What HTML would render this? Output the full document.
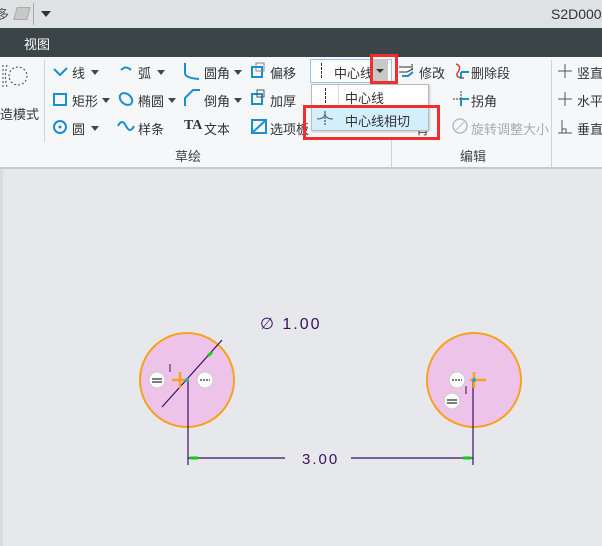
<!DOCTYPE html>
<html><head><meta charset="utf-8"><style>
*{margin:0;padding:0;box-sizing:border-box}
body{width:602px;height:546px;overflow:hidden;background:#e7e8ec;font-family:"Liberation Sans","Noto Sans CJK SC",sans-serif;position:relative;font-size:13px;color:#333}
.a{position:absolute;white-space:nowrap}
.t{font-size:13px;color:#333}
.ic{position:absolute}
.dd{position:absolute;width:0;height:0;border-left:4px solid transparent;border-right:4px solid transparent;border-top:5px solid #444}
</style></head><body>
<div class="a" style="left:0;top:0;width:602px;height:28px;background:#dfe2e3"></div>
<div class="a" style="left:-4px;top:4px;font-size:13px;color:#555">多</div>
<div class="a" style="left:15px;top:7px;width:14px;height:13px;background:#c8c8c8;border:1px solid #aaa;transform:skewX(-15deg)"></div>
<div class="a" style="left:33px;top:3px;width:1px;height:22px;background:#aaa"></div>
<div class="a" style="left:41px;top:11px;width:0;height:0;border-left:5px solid transparent;border-right:5px solid transparent;border-top:6px solid #333"></div>
<div class="a" style="left:551px;top:6px;font-size:14px;color:#333">S2D000</div>
<div class="a" style="left:0;top:28px;width:602px;height:29px;background:#3b4446"></div>
<div class="a" style="left:24px;top:34px;font-size:13px;color:#fff">视图</div>
<div class="a" style="left:0;top:57px;width:602px;height:112px;background:#f6f7f9;border-bottom:2px solid #c5c9cb"></div>
<div class="a" style="left:44px;top:60px;width:1px;height:82px;background:#d0d3d5"></div>
<div class="a" style="left:391px;top:140px;width:1px;height:27px;background:#d0d3d5"></div>
<div class="a" style="left:551px;top:60px;width:1px;height:107px;background:#d0d3d5"></div>
<svg class="ic" style="left:0;top:62px" width="30" height="30"><circle cx="18" cy="14" r="9" fill="none" stroke="#444" stroke-dasharray="2 2"/><path d="M3 3v22M7 3q-3 11 0 22" fill="none" stroke="#444" stroke-dasharray="2 2"/></svg>
<div class="a t" style="left:0;top:104px">造模式</div>
<!-- col1 -->
<svg class="ic" style="left:52px;top:64px" width="18" height="16"><path d="M2 5l6 6 7-7" fill="none" stroke="#1a8fd0" stroke-width="2"/></svg>
<div class="a t" style="left:72px;top:63px">线</div><div class="dd" style="left:91px;top:70px"></div>
<svg class="ic" style="left:52px;top:91px" width="16" height="16"><rect x="2" y="3" width="12" height="11" fill="none" stroke="#1a8fd0" stroke-width="2"/></svg>
<div class="a t" style="left:72px;top:91px">矩形</div><div class="dd" style="left:102px;top:98px"></div>
<svg class="ic" style="left:52px;top:119px" width="16" height="16"><circle cx="8" cy="8" r="6" fill="none" stroke="#1a8fd0" stroke-width="2"/><circle cx="8" cy="8" r="1.5" fill="#1a8fd0"/></svg>
<div class="a t" style="left:72px;top:119px">圆</div><div class="dd" style="left:91px;top:126px"></div>
<!-- col2 -->
<svg class="ic" style="left:118px;top:64px" width="16" height="16"><path d="M3 6q5-5 10 0" fill="none" stroke="#1a8fd0" stroke-width="2"/></svg>
<div class="a t" style="left:138px;top:63px">弧</div><div class="dd" style="left:157px;top:70px"></div>
<svg class="ic" style="left:118px;top:91px" width="16" height="16"><ellipse cx="8" cy="8" rx="7" ry="5" transform="rotate(40 8 8)" fill="none" stroke="#1a8fd0" stroke-width="2"/></svg>
<div class="a t" style="left:138px;top:91px">椭圆</div><div class="dd" style="left:168px;top:98px"></div>
<svg class="ic" style="left:117px;top:119px" width="18" height="14"><path d="M1 7q4-8 8 0t8 0" fill="none" stroke="#1a8fd0" stroke-width="2"/></svg>
<div class="a t" style="left:138px;top:119px">样条</div>
<!-- col3 -->
<svg class="ic" style="left:183px;top:62px" width="18" height="18"><path d="M2 1v10q0 5 14 6" fill="none" stroke="#1a8fd0" stroke-width="2"/></svg>
<div class="a t" style="left:204px;top:63px">圆角</div><div class="dd" style="left:234px;top:70px"></div>
<svg class="ic" style="left:183px;top:89px" width="18" height="18"><path d="M2 17v-8l8-8h7" fill="none" stroke="#1a8fd0" stroke-width="2"/></svg>
<div class="a t" style="left:204px;top:91px">倒角</div><div class="dd" style="left:234px;top:98px"></div>
<div class="a" style="left:184px;top:118px;font-size:14px;font-weight:bold;color:#333;font-family:'Liberation Serif',serif">TA</div>
<div class="a t" style="left:204px;top:119px">文本</div>
<!-- col4 -->
<svg class="ic" style="left:250px;top:62px" width="16" height="18"><rect x="2" y="5" width="10" height="10" fill="none" stroke="#1a8fd0" stroke-width="2"/><rect x="6" y="1" width="8" height="8" fill="none" stroke="#888"/></svg>
<div class="a t" style="left:270px;top:63px">偏移</div>
<svg class="ic" style="left:250px;top:89px" width="16" height="18"><rect x="2" y="5" width="10" height="10" fill="none" stroke="#1a8fd0" stroke-width="2"/><rect x="7" y="1" width="7" height="7" fill="none" stroke="#555"/></svg>
<div class="a t" style="left:270px;top:91px">加厚</div>
<svg class="ic" style="left:250px;top:117px" width="18" height="18"><rect x="2" y="3" width="14" height="13" fill="none" stroke="#1a8fd0" stroke-width="2"/><path d="M2 16L16 3" stroke="#1a8fd0" stroke-width="2"/></svg>
<div class="a t" style="left:270px;top:119px">选项板</div>
<div class="a" style="left:175px;top:146px;font-size:13px;color:#444">草绘</div>
<!-- centerline combo -->
<div class="a" style="left:310px;top:59px;width:82px;height:24px;border:1px solid #8cc8ec;background:#fff"></div>
<div class="a" style="left:321px;top:63px;width:1px;height:15px;border-left:1px dashed #333"></div>
<div class="a t" style="left:334px;top:63px">中心线</div>
<div class="a" style="left:372px;top:59px;width:16px;height:24px;background:#c8c8c8"></div>
<div class="a" style="left:376px;top:69px;border-left:4px solid transparent;border-right:4px solid transparent;border-top:4px solid #333"></div>
<div class="a" style="left:370px;top:54px;width:28px;height:30px;border:3px solid #f02e2e"></div>
<!-- edit -->
<svg class="ic" style="left:398px;top:63px" width="18" height="16"><path d="M1 4h12M14 1v6M1 9h8l6-3" fill="none" stroke="#333"/><path d="M4 13h6l5-4" stroke="#1a8fd0" stroke-width="2" fill="none"/></svg>
<div class="a t" style="left:419px;top:63px">修改</div>
<svg class="ic" style="left:452px;top:62px" width="18" height="18"><path d="M4 2q6 2 2 8t6 6" fill="none" stroke="#d04040" stroke-width="1.5"/><path d="M9 10h8M9 10v7" stroke="#1a8fd0" stroke-width="2"/></svg>
<div class="a t" style="left:471px;top:63px">删除段</div>
<svg class="ic" style="left:452px;top:90px" width="18" height="18"><path d="M9 1v8M1 9h8" stroke="#333" stroke-dasharray="2 1"/><path d="M9 9v7M9 9h8" stroke="#1a8fd0" stroke-width="2"/></svg>
<div class="a t" style="left:471px;top:91px">拐角</div>
<svg class="ic" style="left:451px;top:117px" width="18" height="18"><circle cx="9" cy="9" r="7" fill="none" stroke="#bbb" stroke-width="1.5"/><path d="M5 13l8-8" stroke="#bbb"/></svg>
<div class="a" style="left:471px;top:119px;color:#aaa;font-size:13px">旋转调整大小</div>
<div class="a t" style="left:411px;top:91px;color:#aaa">像</div>
<div class="a t" style="left:416px;top:119px">背</div>
<div class="a" style="left:460px;top:146px;font-size:13px;color:#444">编辑</div>
<!-- right col -->
<svg class="ic" style="left:557px;top:63px" width="16" height="16"><path d="M8 1v14M1 8h14" stroke="#555"/></svg>
<div class="a t" style="left:577px;top:63px">竖直</div>
<svg class="ic" style="left:557px;top:91px" width="16" height="16"><path d="M8 1v14M1 8h14" stroke="#555"/></svg>
<div class="a t" style="left:577px;top:91px">水平</div>
<svg class="ic" style="left:557px;top:119px" width="16" height="16"><path d="M5 1v13M1 14h14M5 10h4v4" stroke="#555" fill="none"/></svg>
<div class="a t" style="left:577px;top:119px">垂直</div>
<!-- dropdown -->
<div class="a" style="left:311px;top:84px;width:118px;height:47px;background:#fff;border:1px solid #b8bcbe;box-shadow:1px 1px 2px rgba(0,0,0,.2)"></div>
<div class="a" style="left:338px;top:85px;width:1px;height:22px;background:#ddd"></div>
<div class="a" style="left:325px;top:88px;height:15px;border-left:1px dashed #333"></div>
<div class="a t" style="left:345px;top:88px">中心线</div>
<div class="a" style="left:312px;top:107px;width:116px;height:23px;background:#d3effc"></div>
<svg class="ic" style="left:316px;top:110px" width="18" height="16"><path d="M9 1v14" stroke="#333" stroke-dasharray="2 1"/><path d="M1 9q8 0 8-6q0 6 8 6" fill="none" stroke="#555"/></svg>
<div class="a t" style="left:345px;top:111px">中心线相切</div>
<div class="a" style="left:303px;top:105px;width:137px;height:35px;border:3px solid #f02e2e"></div>
<!-- canvas -->
<div class="a" style="left:0;top:170px;width:3px;height:376px;background:#d8dcdc"></div>
<svg class="ic" style="left:0;top:0" width="602" height="546">
<circle cx="187" cy="380" r="47" fill="#eec3ea" stroke="#f6a21c" stroke-width="2"/>
<circle cx="474" cy="380" r="47" fill="#eec3ea" stroke="#f6a21c" stroke-width="2"/>
<path d="M188 380v85M473 380v85M188 458h97M351 458h122M162 407L222 340" stroke="#3a1060" stroke-width="1.2" fill="none"/>
<path d="M172 380h16M180 372v16M470 380h16M474 372v16" stroke="#f6a21c" stroke-width="2.5"/>
<circle cx="187" cy="380" r="2" fill="#2ab"/><circle cx="474" cy="380" r="2" fill="#2ab"/>
<path d="M190 458h8M463 458h8M212 352l-4 4" stroke="#1c1" stroke-width="3"/>
<path d="M170 364v8M466 386v8" stroke="#3a1060"/>
<g fill="#fafafa" stroke="#ccc"><circle cx="157" cy="380" r="8"/><circle cx="205" cy="380" r="8"/><circle cx="457" cy="380" r="8"/><circle cx="452" cy="401" r="8"/></g>
<g stroke="#555" stroke-width="1.5"><path d="M152 379h10M152 382h10M447 400h10M447 403h10"/><path d="M200 380h10M452 380h10" stroke-dasharray="2 1"/></g>
<text x="260" y="329" font-family="Liberation Sans,sans-serif" font-size="16" fill="#3a1060" letter-spacing="2">∅ 1.00</text>
<text x="302" y="464" font-family="Liberation Sans,sans-serif" font-size="15" fill="#3a1060" letter-spacing="2">3.00</text>
</svg>
</body></html>
